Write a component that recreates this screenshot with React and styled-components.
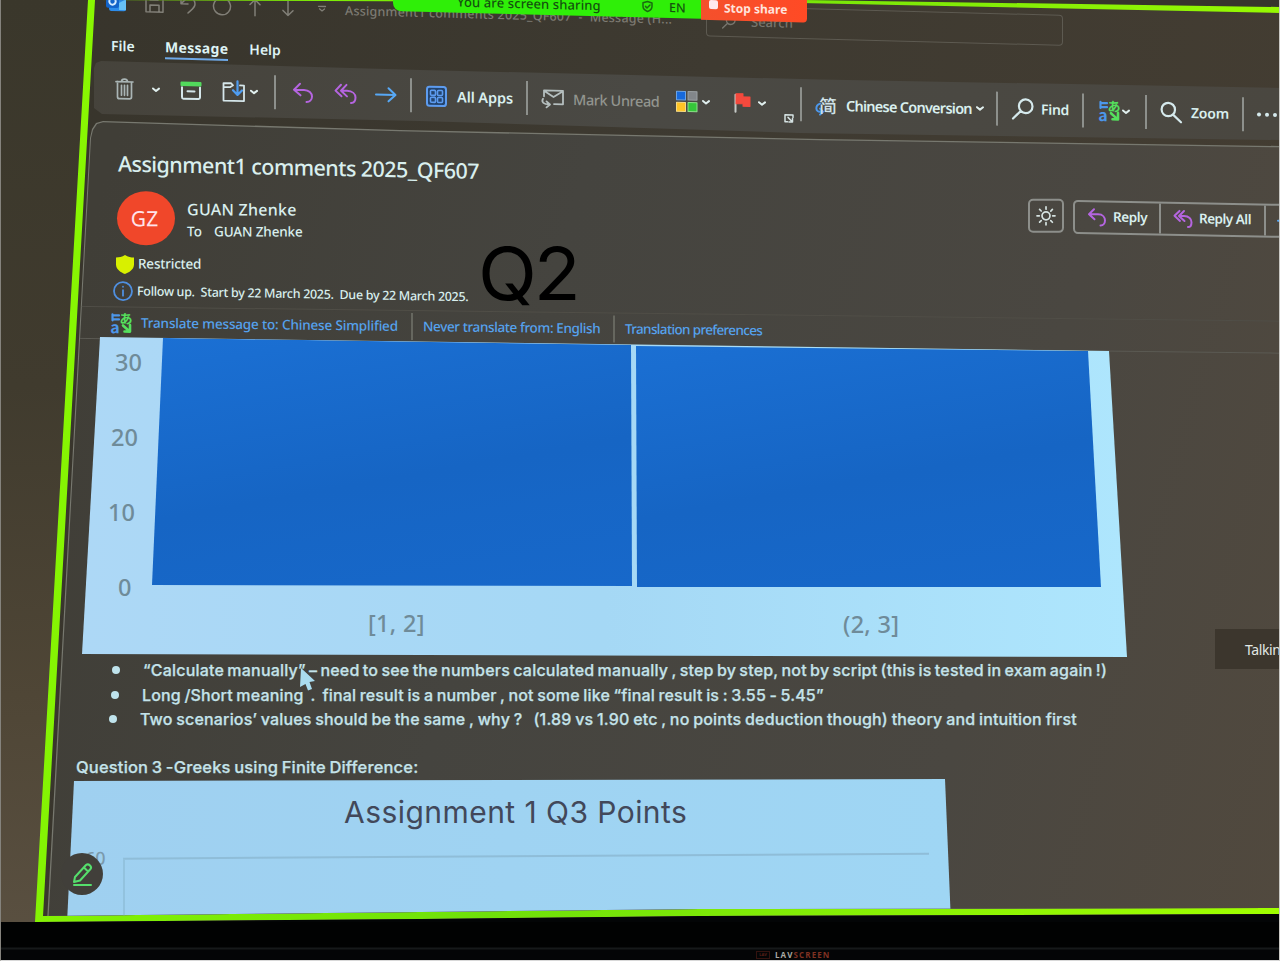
import React from "react";
import styled, { createGlobalStyle } from "styled-components";

const Global = createGlobalStyle`
  * { box-sizing: border-box; }
  html, body { margin: 0; padding: 0; background: #000; overflow: hidden; }
  body { font-family: "Noto Sans", "Open Sans", "Noto Sans CJK SC", sans-serif; }
  svg { display: block; overflow: visible; }
`;

/* ---------- room, bezel and screen ---------- */
const Scene = styled.div`
  position: relative;
  width: 1280px;
  height: 961px;
  overflow: hidden;
  display: flex;
  flex-direction: column;
  background: #030506;
  &::after {
    content: "";
    position: absolute;
    inset: 0;
    border: solid;
    border-width: 0 1px 1px 1px;
    border-color: transparent #c9c8c4 #d8d8d8 #85837d;
    pointer-events: none;
  }
`;
const Wall = styled.div`
  flex: 0 0 922px;
  overflow: hidden;
  background: linear-gradient(178deg, #3a372b 0%, #403b2e 40%, #4f4636 72%, #5b5142 100%);
  clip-path: polygon(0 0, 100% 0, 100% 914px, 700px 916px, 420px 919px, 36px 922px, 0 922px);
`;
const GreenFrame = styled.div`
  height: 922px;
  background: linear-gradient(100deg, #8dfb00, #6fe00a 45%, #a0ff00);
  clip-path: polygon(88px 0, 100% 0, 100% 914px, 700px 916px, 420px 919px, 35px 922px);
`;
const Screen = styled.div`
  height: 922px;
  display: flex;
  flex-direction: column;
  background: linear-gradient(100deg, #37342b, #3e3a31 50%, #443d32);
  clip-path: polygon(95px 0, 800px 3px, 1280px 13px, 1280px 908px, 700px 909px, 420px 912px, 43px 916px);
`;
const ScreenEdge = styled.div`
  position: absolute;
  left: 780px;
  top: 0;
  width: 500px;
  height: 8px;
  background: #37342c;
  clip-path: polygon(0 0, 500px 0, 500px 7px, 24px 0);
`;
const Bezel = styled.div`
  flex: 1;
  display: flex;
  align-items: flex-end;
  padding-left: 756px;
  background: linear-gradient(#010202 0 25px, #16191a 26px 27px, #040506 28px);
`;
const Brand = styled.div`
  display: flex;
  align-items: center;
  gap: 5px;
  height: 12px;
  font: 700 8px/12px "Open Sans", sans-serif;
  color: #a9a9a3;
  letter-spacing: 1.1px;
  span { color: #7e3122; }
`;
const BrandMark = styled.i`
  width: 14px;
  height: 8px;
  border: 1px solid #34130f;
  font: 700 4px/6px "Open Sans", sans-serif;
  letter-spacing: 0;
  text-align: center;
  color: #5a2018;
`;

/* ---------- shared row pieces ---------- */
const Tilted = styled.div`
  display: flex;
  align-items: ${(p) => p.$align || "center"};
  flex: 0 0 ${(p) => p.$h}px;
  height: ${(p) => p.$h}px;
  width: 1280px;
  padding-left: ${(p) => p.$left || 0}px;
  transform: skewY(${(p) => p.$tilt}deg);
  transform-origin: 0 0;
`;
const Slot = styled.div`
  flex: 0 0 ${(p) => p.$w}px;
  margin-left: ${(p) => p.$gap || 0}px;
  margin-top: ${(p) => p.$drop || 0}px;
  display: flex;
  align-items: center;
`;
const Label = styled.span`
  flex: 0 0 ${(p) => p.$w}px;
  width: ${(p) => p.$w}px;
  margin-left: ${(p) => p.$gap || 0}px;
  white-space: pre;
  font-size: ${(p) => p.$size || 14}px;
  font-weight: ${(p) => p.$weight || 500};
  letter-spacing: ${(p) => p.$track || 0}px;
  line-height: 1.3;
  color: ${(p) => p.$color || "#d9efee"};
`;
const Divider = styled.div`
  flex: 0 0 2px;
  height: ${(p) => p.$h || 34}px;
  margin-left: ${(p) => p.$gap}px;
  background: ${(p) => p.$color || "#8d908c"};
`;

/* ---------- title bar and tabs ---------- */
const Tab = styled.div`
  flex: 0 0 ${(p) => p.$w}px;
  margin-left: ${(p) => p.$gap || 0}px;
  margin-top: 2px;
  height: 22px;
  font-size: 14px;
  line-height: 20px;
  font-weight: ${(p) => (p.$active ? 700 : 600)};
  letter-spacing: ${(p) => p.$track || 0}px;
  color: #def3f5;
  white-space: nowrap;
  border-bottom: 2px solid ${(p) => (p.$active ? "#6ea9e8" : "transparent")};
`;
const SearchBox = styled.div`
  flex: 0 0 357px;
  height: 31px;
  margin-left: 34px;
  margin-top: -13px;
  padding-left: 15px;
  display: flex;
  align-items: center;
  border: 1px solid #5d5a51;
  border-radius: 4px;
`;

/* ---------- ribbon ---------- */
const Ribbon = styled.div`
  flex: 0 0 84px;
  margin-bottom: -24px;
  background: linear-gradient(100deg, #45423a, #4a4944 50%, #4a4740);
  clip-path: polygon(94px 8px, 96px 3px, 101px 1px, 420px 10px, 820px 19.5px, 1280px 28px, 1280px 80px, 800px 73px, 420px 61px, 102px 54px, 94px 48px);
`;

/* ---------- message pane ---------- */
const PaneEdge = styled.div`
  flex: 0 0 802px;
  background: #77786f;
  clip-path: polygon(90px 18px, 92px 9px, 96px 3px, 103px 1px, 400px 10px, 820px 19px, 1280px 26px, 1280px 802px, 47px 802px);
`;
const Pane = styled.div`
  height: 802px;
  display: flex;
  flex-direction: column;
  background: linear-gradient(105deg, #403e37 8%, #45443f 40%, #4a4741 75%, #51493e 100%);
  clip-path: polygon(91px 18px, 93px 10px, 97px 4px, 103px 2.3px, 400px 11.3px, 820px 20.3px, 1280px 27.3px, 1280px 802px, 48.3px 802px);
`;
const Avatar = styled.div`
  flex: 0 0 58px;
  height: 54px;
  margin-top: -5px;
  border-radius: 50%;
  background: #f0472a;
  color: #ffe3ea;
  font-size: 21px;
  display: flex;
  align-items: center;
  justify-content: center;
  padding-right: 3px;
`;
const Names = styled.div`
  flex: 0 0 841px;
  margin-left: 12px;
  display: flex;
  flex-direction: column;
  gap: 3px;
`;
const NameLine = styled.div`
  display: flex;
`;
const OutlineButton = styled.div`
  flex: 0 0 ${(p) => p.$w}px;
  height: ${(p) => p.$h || 34}px;
  margin-left: ${(p) => p.$gap || 0}px;
  margin-top: -12px;
  display: flex;
  align-items: center;
  justify-content: center;
  border: 2px solid #8d8f8b;
  border-radius: 5px;
`;
const ButtonGroup = styled.div`
  flex: 0 0 240px;
  height: 34px;
  margin-left: 9px;
  margin-top: -11px;
  display: flex;
  border: 2px solid #8d8f8b;
  border-radius: 5px;
  transform: skewY(1deg);
  transform-origin: 0 0;
`;
const GroupPart = styled.div`
  flex: 0 0 ${(p) => p.$w}px;
  padding-left: ${(p) => p.$pad}px;
  display: flex;
  align-items: center;
  border-right: 2px solid #8d8f8b;
`;
const TranslateBar = styled(Tilted)`
  margin-top: 5px;
  border-top: 1px solid #504e47;
  border-bottom: 1px solid #5b5a53;
`;

/* ---------- message body ---------- */
const Body = styled.div`
  flex: 1;
  display: flex;
  flex-direction: column;
`;
const Histogram = styled.div`
  width: 1045px;
  flex: 0 0 320px;
  margin-left: 82px;
  margin-top: -1px;
  display: grid;
  grid-template-columns: 70px 480px 4px 465px;
  grid-template-rows: 250px 70px;
  background: linear-gradient(90deg, #add8f6, #a5d8f5 50%, #aee6fd);
  clip-path: polygon(18px 0, 1027px 14px, 1045px 320px, 0 317px);
`;
const Axis = styled.div`
  display: flex;
  flex-direction: column;
  gap: 51px;
  padding-top: 13px;
  font: 500 23.5px/24px "Noto Sans", sans-serif;
  color: #6f8b99;
`;
const Tick = styled.span`
  padding-left: ${(p) => p.$x}px;
`;
const Bar = styled.div`
  grid-column: ${(p) => p.$col};
  background: linear-gradient(170deg, #1b70d4, #1665c4 55%, #1768ca);
  clip-path: polygon(${(p) => p.$shape});
`;
const BinLabel = styled.div`
  grid-column: ${(p) => p.$col};
  grid-row: 2;
  padding: ${(p) => p.$pad};
  font: 500 23.5px/32px "Noto Sans", sans-serif;
  letter-spacing: 0.3px;
  color: #6f8b99;
`;
const Bullets = styled.ul`
  list-style: none;
  margin: 0;
  padding: 1px 0 0 0;
  flex: 0 0 98px;
`;
const Bullet = styled.li`
  display: flex;
  align-items: center;
  height: 24.5px;
  padding-left: ${(p) => p.$left}px;
  font: 500 16px/24px Inter, sans-serif;
  letter-spacing: ${(p) => p.$track}px;
  word-spacing: ${(p) => p.$space}px;
  color: #c4e3ea;
  white-space: pre;
  -webkit-text-stroke: 0.25px #c4e3ea;
  &::before {
    content: "";
    width: 8px;
    height: 8px;
    margin-right: 23px;
    border-radius: 50%;
    background: #bfe3ec;
  }
`;
const Question = styled.div`
  flex: 0 0 23px;
  padding-left: 76px;
  font: 500 16.5px/24px Inter, sans-serif;
  letter-spacing: 0.17px;
  word-spacing: -1px;
  color: #c4e3ea;
  -webkit-text-stroke: 0.25px #c4e3ea;
`;
const PointsChart = styled.div`
  width: 884px;
  flex: 0 0 144px;
  margin-left: 67px;
  display: flex;
  flex-direction: column;
  background: linear-gradient(90deg, #9fd0f0, #9fd6f4);
  clip-path: polygon(7px 2px, 878px 0, 884px 144px, 0 144px);
`;
const ChartTitle = styled.div`
  height: 67px;
  padding-left: 277px;
  font: 400 30px/66px Inter, sans-serif;
  letter-spacing: 0.45px;
  color: #42485a;
`;
const PlotRow = styled.div`
  display: flex;
  transform: skewY(-0.35deg);
  transform-origin: 0 0;
  font: 500 18px/24px "Noto Sans", sans-serif;
  color: #7b9aac;
`;
const PlotTick = styled.span`
  flex: 0 0 56px;
  padding-left: 18px;
`;
const PlotArea = styled.div`
  width: 806px;
  height: 72px;
  margin-top: 12px;
  border-top: 2px solid #8fbdd8;
  border-left: 2px solid #92c2de;
`;

/* ---------- overlays ---------- */
const ShareBar = styled.div`
  position: absolute;
  left: 393px;
  top: -14px;
  width: 414px;
  height: 25px;
  display: flex;
  transform: skewY(1.45deg);
  transform-origin: 0 0;
  font-size: 12px;
  line-height: 16px;
`;
const ShareStatus = styled.div`
  flex: 0 0 308px;
  display: flex;
  align-items: flex-end;
  padding: 0 0 2px 64px;
  background: #2fef08;
  border-radius: 0 0 0 8px;
  color: #14520f;
`;
const StopShare = styled.div`
  flex: 0 0 106px;
  height: 26px;
  display: flex;
  align-items: flex-end;
  padding: 0 0 4px 7px;
  background: linear-gradient(90deg, #f4502c, #ff4a25);
  border-radius: 0 0 4px 0;
`;
const Annotation = styled.div`
  position: absolute;
  left: 478px;
  top: 232px;
  font: 400 73px/84px Inter, Arial, sans-serif;
  letter-spacing: -3px;
  color: #000;
  transform: scaleX(1.055);
  transform-origin: 0 0;
`;
const TalkingTag = styled.div`
  position: absolute;
  left: 1215px;
  top: 629px;
  width: 80px;
  height: 40px;
  padding-left: 30px;
  background: #3c362d;
  color: #e2e8e4;
  font-size: 14px;
  line-height: 42px;
  letter-spacing: -0.4px;
`;
const PenButton = styled.div`
  position: absolute;
  left: 61px;
  top: 853px;
  width: 42px;
  height: 42px;
  border-radius: 50%;
  background: #413f3a;
  display: flex;
  align-items: center;
  justify-content: center;
`;
const Pointer = styled.svg`
  position: absolute;
  left: 300px;
  top: 668px;
`;

/* ---------- icons ---------- */
const Svg = ({ w = 22, h = 22, c = "#cfe3e5", s = 2, children }) => (
  <svg width={w} height={h} viewBox={`0 0 ${w} ${h}`} fill="none" stroke={c} strokeWidth={s} strokeLinecap="round" strokeLinejoin="round">{children}</svg>
);
const Caret = ({ c = "#e0efee" }) => <Svg w={8} h={5} c={c}><path d="M1 1 L4 3.4 L7 1" /></Svg>;
const ReplyIcon = () => <Svg w={22} h={22} c="#b565e0"><path d="M8 2 L2 8 L8.5 13.5 M2 8 H12 C17 8 20 11 20 14.5 C20 18 17.5 20 14.5 20" /></Svg>;
const ReplyAllIcon = () => <Svg w={23} h={22} c="#b565e0"><path d="M7 2 L1.5 8 L7.5 13.5 M12.5 2 L7 8 L13 13.5 M7 8 H13 C18.5 8 21.5 11 21.5 14.5 C21.5 18 19.5 20 17 20" /></Svg>;
const TrashIcon = () => <Svg w={19} h={22} c="#aab5b5" s={1.7}><path d="M1 4 H18 M6.5 4 C6.5 0.5 12.5 0.5 12.5 4 M2.5 4 V19 Q2.5 21 4.5 21 H14.5 Q16.5 21 16.5 19 V4 M6.5 7.5 V17.5 M9.5 7.5 V17.5 M12.5 7.5 V17.5" /></Svg>;
const ArchiveIcon = () => <Svg w={22} h={19} c="#d5e6ea"><path d="M2 6 V16 Q2 17.5 3.5 17.5 H18.5 Q20 17.5 20 16 V6 M7.5 10 H14.5" /><path d="M1.5 1.5 H20.5 V4 H1.5 Z" stroke="#52d95c" fill="#52d95c" /></Svg>;
const MoveIcon = () => <Svg w={23} h={21} c="#d5e6ea" s={1.8}><path d="M11 4 L9 2 H1.5 V19.5 H22 V4 H18 M1.5 6 H8 L11 4" /><path d="M15.5 0 V13 M11 9 L15.5 13.5 L20 9" stroke="#4e9cf0" strokeWidth="2.2" /></Svg>;
const ForwardIcon = () => <Svg w={22} h={18} c="#57a8f5"><path d="M1 9 H20 M13.5 2.5 L20.5 9 L13.5 15.5" /></Svg>;
const AppsIcon = () => (
  <Svg w={21} h={21} c="#5d9cf0" s={1.6}>
    <rect x="1" y="1" width="19" height="19" rx="2.5" strokeWidth="2" fill="#23446e" />
    {[[4.5, 4.5], [11.5, 4.5], [4.5, 11.5], [11.5, 11.5]].map(([x, y]) => <rect key={`${x}-${y}`} x={x} y={y} width="5" height="5" rx="1" />)}
  </Svg>
);
const UnreadIcon = () => <Svg w={24} h={20} c="#b5bfbf" s={1.8}><path d="M3 8 V2 H22 V15.500 H13 M3 2.500 L12.500 8.500 L22 2.500 M2 10.500 C0 14 3 16 8 16 M5.500 13 L9 16 L5.500 19" /></Svg>;
const CategoryIcon = () => (
  <Svg w={22} h={22} s={1}>
    <rect x="0.500" y="1" width="9" height="8.500" fill="#1669dc" stroke="#6ba3e4" />
    <rect x="12" y="1" width="9" height="8.500" fill="#82868a" stroke="#9aa0a2" />
    <rect x="0.500" y="12" width="9" height="9" fill="#ffc425" stroke="#f5da86" />
    <rect x="12" y="12" width="9" height="9" fill="#35c63a" stroke="#8de08b" />
  </Svg>
);
const FlagIcon = () => <Svg w={17} h={20} s={2}><path d="M1.500 2 V19" stroke="#c6cbc8" /><path d="M2 1 H9 V4 H16 V13.500 H9 V11 H2 Z" fill="#f4493d" stroke="#f4493d" strokeWidth="1" /></Svg>;
const LauncherIcon = () => <Svg w={10} h={9} c="#d5e2e2" s={1.500}><path d="M9 3.500 V1 H1 V8 H3.500 M4 3.500 L8 7.500 M8.500 4.500 V8 H5" /></Svg>;
const SearchIcon = ({ flip, c = "#d5e9ec", size = 22 }) => (
  <svg width={size} height={size} viewBox="0 0 22 22" fill="none" stroke={c} strokeWidth="2.2" strokeLinecap="round">
    {flip ? <path d="M20.500 8 A6.800 6.800 0 1 0 6.900 8 A6.800 6.800 0 1 0 20.500 8 M8.800 12.800 L1 20.500" /> : <path d="M15 8 A6.700 6.700 0 1 0 1.600 8 A6.700 6.700 0 1 0 15 8 M13 13 L21 20.500" />}
  </svg>
);
const SunIcon = () => <Svg w={20} h={20} c="#d5e2e0" s={1.700}><circle cx="10" cy="10" r="4" /><path d="M10 1 V3.300 M10 16.700 V19 M1 10 H3.300 M16.700 10 H19 M3.600 3.600 L5.200 5.200 M14.800 14.800 L16.400 16.400 M3.600 16.400 L5.200 14.800 M14.800 5.200 L16.400 3.600" /></Svg>;

const GlyphPair = styled.span`
  display: flex;
  width: 22px;
  height: 22px;
  line-height: 1;
  font-family: "Noto Sans CJK JP", sans-serif;
  font-weight: 700;
`;
const GlyphLeft = styled.span`
  width: 10px;
  display: flex;
  flex-direction: column;
  align-items: center;
  color: #4c97ea;
`;
const GlyphRight = styled(GlyphLeft)`
  width: 12px;
  color: #55e05d;
`;
const Glyph = styled.span`
  font-size: ${(p) => p.$s}px;
  line-height: ${(p) => p.$lh}px;
  height: ${(p) => p.$lh}px;
`;
const TranslateIcon = () => (
  <GlyphPair>
    <GlyphLeft><Svg w={9} h={9} c="#4c97ea" s={2.200}><path d="M1.500 2 V8 M1.500 3 H8 M1.500 7 H8" /></Svg><Glyph $s={16} $lh={11}>a</Glyph></GlyphLeft>
    <GlyphRight><Glyph $s={13} $lh={11}>あ</Glyph><Svg w={9} h={9} c="#55e05d" s={2.600}><path d="M1 2 L6 6.500 M8 1.500 V8 H2.500" /></Svg></GlyphRight>
  </GlyphPair>
);
const ConversionGlyph = styled.span`
  display: flex;
  align-items: flex-end;
  justify-content: flex-end;
  width: 22px;
  height: 22px;
  font: 500 18px/22px "Noto Sans CJK SC", sans-serif;
  color: #cfe2e8;
  svg { margin-right: -8px; }
`;

const QUICK = "#817f77";
const LINK = "#55a2ee";

export default function App() {
  return (
    <>
      <Global />
      <Scene>
        <Wall>
          <GreenFrame>
            <Screen>
              <Tilted $h={31} $tilt={1.5} $left={106} $align="flex-start">
                <Slot $w={21} $drop={-12}>
                  <Svg w={21} h={21} s={1}><rect x="3" y="0" width="17" height="20" rx="2" fill="#2c8ceb" stroke="none" /><rect x="0" y="4" width="13" height="13" rx="2" fill="#1263c9" stroke="none" /><circle cx="6.500" cy="10.500" r="3.200" stroke="#d6ecff" strokeWidth="2" /><path d="M13 12 L20 8 V19 H13 Z" fill="#66c0f5" stroke="none" /></Svg>
                </Slot>
                <Slot $w={19} $gap={18} $drop={-10}><Svg w={19} h={19} c={QUICK} s={1.500}><path d="M1 1 H15 L18 4 V18 H1 Z M5 1 V6 H13 V1 M5 18 V11 H14 V18" /></Svg></Slot>
                <Slot $w={16} $gap={16} $drop={-9}><Svg w={16} h={18} c={QUICK} s={1.500}><path d="M1 1 V8 H8 M1 8 L5 4 C10 0 15 3 15 8 C15 12 11 14 8 17" /></Svg></Slot>
                <Slot $w={20} $gap={16} $drop={-10}><Svg w={20} h={20} c={QUICK} s={1.500}><path d="M14 3 A8.500 8.500 0 1 1 6 3 M14 3 V-2 M14 3 H19" /></Svg></Slot>
                <Slot $w={12} $gap={17} $drop={-8}><Svg w={12} h={18} c={QUICK} s={1.500}><path d="M6 17 V1 M1 6 L6 1 L11 6" /></Svg></Slot>
                <Slot $w={12} $gap={21} $drop={-9}><Svg w={12} h={18} c={QUICK} s={1.500}><path d="M6 1 V17 M1 12 L6 17 L11 12" /></Svg></Slot>
                <Slot $w={8} $gap={24} $drop={-3}><Svg w={8} h={6} c={QUICK} s={1.300}><path d="M0.500 1 H7.500 M1.500 3.500 L4 5.500 L6.500 3.500" /></Svg></Slot>
                <Slot $w={327} $gap={19} $drop={-6}><Label $w={327} $size={12.500} $color="#7d7b73" $track={0.22}>{"Assignment1 comments 2025_QF607  -  Message (H..."}</Label></Slot>
                <SearchBox>
                  <SearchIcon flip c="#77756d" size={14} />
                  <Label $w={50} $gap={15} $size={13} $color="#77756d">Search</Label>
                </SearchBox>
              </Tilted>

              <Tilted $h={29} $tilt={1.5} $left={111} $align="flex-start">
                <Tab $w={24}>File</Tab>
                <Tab $w={63} $gap={30} $active $track={0.3}>Message</Tab>
                <Tab $w={34} $gap={21}>Help</Tab>
              </Tilted>

              <Ribbon>
                <Tilted $h={52} $tilt={1.3} $left={115}>
                  <Slot $w={19}><TrashIcon /></Slot>
                  <Slot $w={8} $gap={18}><Caret /></Slot>
                  <Slot $w={22} $gap={20}><ArchiveIcon /></Slot>
                  <Slot $w={23} $gap={20}><MoveIcon /></Slot>
                  <Slot $w={8} $gap={5}><Caret /></Slot>
                  <Divider $gap={16} />
                  <Slot $w={22} $gap={16}><ReplyIcon /></Slot>
                  <Slot $w={23} $gap={20}><ReplyAllIcon /></Slot>
                  <Slot $w={22} $gap={18}><ForwardIcon /></Slot>
                  <Divider $gap={13} />
                  <Slot $w={21} $gap={14}><AppsIcon /></Slot>
                  <Label $w={57} $gap={10} $size={14.500} $weight={600} $track={-0.1}>All Apps</Label>
                  <Divider $gap={12} />
                  <Slot $w={24} $gap={13}><UnreadIcon /></Slot>
                  <Label $w={86} $gap={8} $size={14.500} $color="#92958f" $track={-0.4}>Mark Unread</Label>
                  <Slot $w={22} $gap={17}><CategoryIcon /></Slot>
                  <Slot $w={8} $gap={4}><Caret /></Slot>
                  <Slot $w={17} $gap={24}><FlagIcon /></Slot>
                  <Slot $w={8} $gap={7}><Caret /></Slot>
                  <Slot $w={10} $gap={18} $drop={28}><LauncherIcon /></Slot>
                  <Divider $gap={6} />
                  <Slot $w={22} $gap={13}><ConversionGlyph><Svg w={12} h={18} c="#4c97ea" s={2}><path d="M5 6 C0 8 0 15 6 14 M5 11 L8 14 L5 17" /></Svg>简</ConversionGlyph></Slot>
                  <Label $w={125} $gap={9} $size={14.500} $track={-0.75} $weight={600}>Chinese Conversion</Label>
                  <Slot $w={8} $gap={5}><Caret /></Slot>
                  <Divider $gap={12} />
                  <Slot $w={22} $gap={14}><SearchIcon flip /></Slot>
                  <Label $w={29} $gap={7} $size={14} $weight={600} $track={-0.3}>Find</Label>
                  <Divider $gap={12} />
                  <Slot $w={22} $gap={14}><TranslateIcon /></Slot>
                  <Slot $w={8} $gap={2}><Caret /></Slot>
                  <Divider $gap={15} />
                  <Slot $w={22} $gap={13}><SearchIcon /></Slot>
                  <Label $w={39} $gap={9} $size={14} $weight={600} $track={-0.2}>Zoom</Label>
                  <Divider $gap={12} />
                  <Slot $w={22} $gap={12}><Svg w={22} h={4} s={0}><circle cx="3" cy="2" r="2" fill="#d5e9ec" /><circle cx="11" cy="2" r="2" fill="#d5e9ec" /><circle cx="19" cy="2" r="2" fill="#d5e9ec" /></Svg></Slot>
                </Tilted>
              </Ribbon>

              <PaneEdge>
                <Pane>
                  <Tilted $h={70} $tilt={1.2} $left={118}>
                    <Slot $w={400} $drop={12}><Label $w={400} $size={21.500} $weight={500} $track={-0.55}>Assignment1 comments 2025_QF607</Label></Slot>
                  </Tilted>
                  <Tilted $h={60} $tilt={0.1} $left={117}>
                    <Avatar>GZ</Avatar>
                    <Names>
                      <NameLine><Label $w={130} $size={16} $track={0.25}>GUAN Zhenke</Label></NameLine>
                      <NameLine><Label $w={27} $size={13.500}>To</Label><Label $w={100} $size={13.500} $track={-0.15}>GUAN Zhenke</Label></NameLine>
                    </Names>
                    <OutlineButton $w={36}><SunIcon /></OutlineButton>
                    <ButtonGroup>
                      <GroupPart $w={86} $pad={12}><Svg w={20} h={20} c="#b565e0"><path d="M7 2 L2 7 L7.500 12 M2 7 H11 C16 7 18 10 18 13 C18 16 16 18 13.500 18" /></Svg><Label $w={34} $gap={6} $size={13.500} $weight={600} $track={-0.4}>Reply</Label></GroupPart>
                      <GroupPart $w={105} $pad={12}><Svg w={20} h={20} c="#b565e0"><path d="M6.500 2 L1.500 7 L7 12 M11 2 L6 7 L11.500 12 M6 7 H11 C16 7 18.500 10 18.500 13 C18.500 16 17 18 15 18" /></Svg><Label $w={53} $gap={6} $size={13.500} $weight={600} $track={-0.5}>Reply All</Label></GroupPart>
                      <GroupPart $w={60} $pad={11}><ForwardIcon /></GroupPart>
                    </ButtonGroup>
                  </Tilted>
                  <Tilted $h={28} $tilt={0.2} $left={116}>
                    <Svg w={18} h={20} s={0}><path d="M9 0.500 C12 2.500 15 3 18 3 V10 C18 15 13 18 9 19.500 C5 18 0 15 0 10 V3 C3 3 6 2.500 9 0.500 Z" fill="#d8f000" /></Svg>
                    <Label $w={80} $gap={4} $size={13.500} $track={-0.2}>Restricted</Label>
                  </Tilted>
                  <Tilted $h={22} $tilt={1} $left={113}>
                    <Svg w={20} h={20} c="#4f8fdf" s={1.800}><circle cx="10" cy="10" r="9" /><path d="M10 9 V14.500 M10 5.500 V5.700" /></Svg>
                    <Label $w={340} $gap={4} $size={12.500} $track={-0.3}>{"Follow up.  Start by 22 March 2025.  Due by 22 March 2025."}</Label>
                  </Tilted>
                  <TranslateBar $h={33} $tilt={0.7} $left={110}>
                    <TranslateIcon />
                    <Label $w={257} $gap={9} $size={13.500} $track={-0.16} $color={LINK}>Translate message to: Chinese Simplified</Label>
                    <Divider $gap={13} $h={27} $color="#66675f" />
                    <Label $w={178} $gap={10} $size={13.500} $track={-0.38} $color={LINK}>Never translate from: English</Label>
                    <Divider $gap={12} $h={27} $color="#66675f" />
                    <Label $w={140} $gap={10} $size={13.500} $track={-0.65} $color={LINK}>Translation preferences</Label>
                  </TranslateBar>
                  <Body>
                    <Histogram>
                      <Axis><Tick $x={33}>30</Tick><Tick $x={29}>20</Tick><Tick $x={26}>10</Tick><Tick $x={36}>0</Tick></Axis>
                      <Bar $col={2} $shape="11px 1px, 479px 8px, 480px 249px, 0 248px" />
                      <Bar $col={4} $shape="0 9px, 452px 14px, 465px 250px, 1px 250px" />
                      <BinLabel $col={2} $pad="20px 0 0 216px">[1, 2]</BinLabel>
                      <BinLabel $col={4} $pad="21px 0 0 207px">(2, 3]</BinLabel>
                    </Histogram>
                    <Bullets>
                      <Bullet $left={112} $track={0.2} $space={-1.2}>“Calculate manually” – need to see the numbers calculated manually , step by step, not by script (this is tested in exam again !)</Bullet>
                      <Bullet $left={111} $track={0.16} $space={-0.9}>{"Long /Short meaning  .  final result is a number , not some like “final result is : 3.55 - 5.45”"}</Bullet>
                      <Bullet $left={109} $track={0.16} $space={-0.7}>{"Two scenarios’ values should be the same , why ?   (1.89 vs 1.90 etc , no points deduction though) theory and intuition first"}</Bullet>
                    </Bullets>
                    <Question>Question 3 -Greeks using Finite Difference:</Question>
                    <PointsChart>
                      <ChartTitle>Assignment 1 Q3 Points</ChartTitle>
                      <PlotRow><PlotTick>60</PlotTick><PlotArea /></PlotRow>
                    </PointsChart>
                  </Body>
                </Pane>
              </PaneEdge>
            </Screen>
          </GreenFrame>
        </Wall>
        <Bezel>
          <Brand><BrandMark>LAV</BrandMark><div>LAV<span>SCREEN</span></div></Brand>
        </Bezel>

        <ScreenEdge />
        <ShareBar>
          <ShareStatus>
            <Label $w={144} $size={13} $track={0.1} $color="#14520f">You are screen sharing</Label>
            <Slot $w={11} $gap={41}><Svg w={11} h={14} c="#1a6a10" s={1.500}><path d="M5.500 0 L10 1.500 V5 C10 8 7 9.500 5.500 10 C4 9.500 1 8 1 5 V1.500 Z M3.500 5 L5 6.500 L8 3.500" /></Svg></Slot>
            <Label $w={20} $gap={16} $size={12.500} $color="#14520f">EN</Label>
          </ShareStatus>
          <StopShare>
            <Svg w={10} h={16} s={0}><rect x="1" y="0" width="9" height="9" rx="2" fill="#ffe9ee" /></Svg>
            <Label $w={66} $gap={6} $size={12} $weight={700} $color="#ffe3dc">Stop share</Label>
          </StopShare>
        </ShareBar>
        <Annotation>Q2</Annotation>
        <TalkingTag>Talking</TalkingTag>
        <Pointer width="16" height="24" viewBox="0 0 16 24"><path d="M1 0 L15 13 L9.500 14 L12 21 L8 22.500 L5.500 16 L0 19 Z" fill="#a9dcef" /></Pointer>
        <PenButton><Svg w={21} h={23} c="#55df6c" s={2}><path d="M3 14 L14 2 Q16 0.500 18 2.500 Q20 4.500 18.500 6 L8 17.500 L2 19 Z M12 4.500 L16 8.500 M2 22 H19" /></Svg></PenButton>
      </Scene>
    </>
  );
}
